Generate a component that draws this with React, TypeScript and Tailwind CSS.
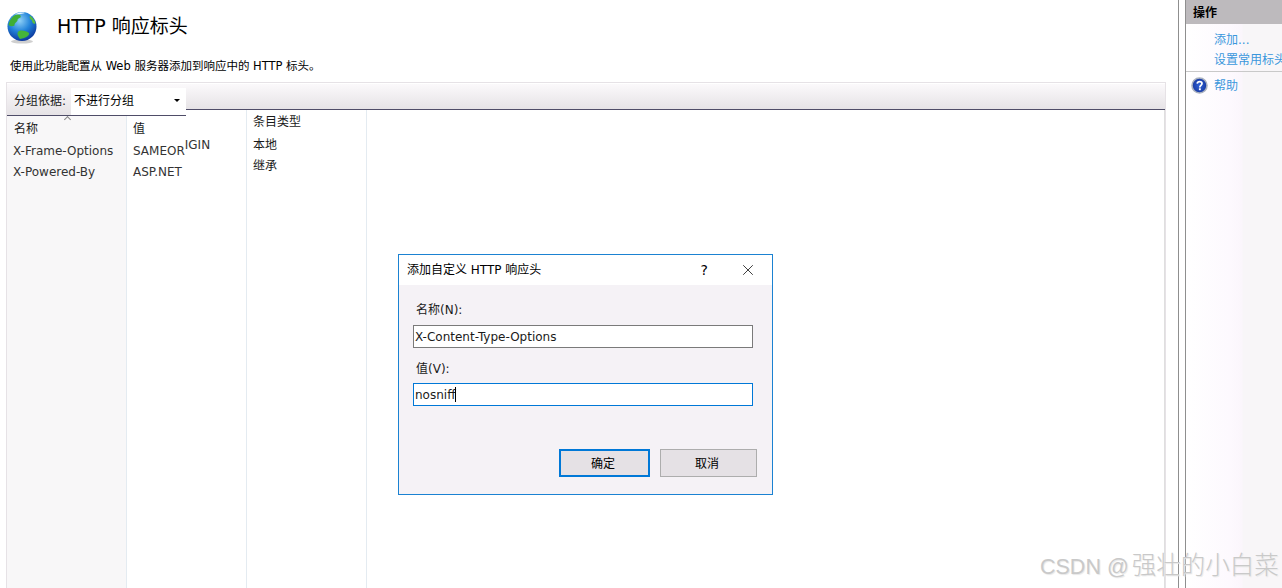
import { X } from "lucide-react";

const ui = "font-['DejaVu_Sans','Noto_Sans_CJK_SC',sans-serif]";

function Globe() {
  return (
    <svg width="32" height="34" viewBox="0 0 32 34">
      <defs>
        <radialGradient id="sea" cx="0.42" cy="0.3" r="0.75">
          <stop offset="0" stopColor="#8fd0f6" />
          <stop offset="0.5" stopColor="#2283da" />
          <stop offset="1" stopColor="#0a2f96" />
        </radialGradient>
      </defs>
      <ellipse cx="16" cy="31.5" rx="11" ry="2" fill="#cfcfcf" />
      <circle cx="16" cy="16.5" r="14.5" fill="url(#sea)" />
      <path d="M2.5 15c1-5 4-9 8-10.500 3-.5 5 .5 4 3-2 1-3 1-3 3-1 2-3 2-3 5-2 1-4 1-6-.5z" fill="#3fae35" />
      <path d="M14 29c-2-3-4-6-1-8 3-1 8 0 10 2 1 2-3 5-9 6z" fill="#45b53a" />
      <path d="M24 5.500c3 2 5 5 5.500 8-2 1-3.500-1-3.500-3-2-1-3-3-2-5z" fill="#58bd43" />
      <path d="M9 4.500c3-2 7-2.500 10-1.500-2 1-6 1-10 1.500z" fill="#e6f5ff" />
    </svg>
  );
}

function HelpIcon() {
  return (
    <svg width="17" height="17" viewBox="0 0 17 17">
      <defs>
        <radialGradient id="help" cx="0.5" cy="0.5" r="0.55">
          <stop offset="0" stopColor="#2f62d6" />
          <stop offset="0.8" stopColor="#1b3ea8" />
          <stop offset="1" stopColor="#16307f" />
        </radialGradient>
      </defs>
      <circle cx="8.500" cy="8.500" r="7.500" fill="url(#help)" stroke="#a9b1bf" strokeWidth="1.600" />
      <path d="M6.200 6.600c.2-1.400 1.200-2 2.400-2 1.400 0 2.400.8 2.400 2 0 1.800-2.200 1.800-2.200 3.800" fill="none" stroke="#fff" strokeWidth="1.700" />
      <rect x="7.900" y="11.300" width="1.900" height="1.900" fill="#fff" />
    </svg>
  );
}

export default function App() {
  return (
    <div className={`${ui} relative flex h-[588px] w-[1282px] overflow-hidden bg-white text-xs text-[#1a1a1a]`}>
      {/* main feature page */}
      <div className="flex w-[1166px] shrink-0 flex-col pl-[6px]">
        <div className="flex h-[54px] items-center">
          <Globe />
          <span className="ml-[19px] text-[19px] text-black">HTTP 响应标头</span>
        </div>
        <p className="pl-1 pt-[5px] text-[11.5px] leading-[14px] text-black">
          使用此功能配置从 Web 服务器添加到响应中的 HTTP 标头。
        </p>
        <div className="mt-[9px] flex min-h-0 flex-1 flex-col border-x border-t border-[#e6e2e6] pt-px">
          {/* toolbar strip, its group by part is drawn over it below */}
          <div className="h-[26px] shrink-0 border-b border-[#4f4d68] bg-[linear-gradient(#fbf9fb,#e6e3e6)]" />
          {/* grid columns */}
          <div className="flex min-h-0 flex-1">
            <div className="relative w-[120px] border-r border-[#e4ebf1] bg-[#f8f7f8] pl-[6px] pt-[11px]">
              <div className="h-[20px] pl-px">名称</div>
              <div className="mt-px h-[21px] leading-[18px] text-[#333]">X-Frame-Options</div>
              <div className="leading-[18px] text-[#333]">X-Powered-By</div>
            </div>
            <div className="w-[120px] border-r border-[#e4ebf1] pl-[6px] pt-[11px]">
              <div className="h-[20px]">值</div>
              <div className="relative mt-px h-[21px] leading-[18px] text-[#333]">
                SAMEOR<span className="relative -top-[6px]">IGIN</span>
              </div>
              <div className="leading-[18px] text-[#333]">ASP.NET</div>
            </div>
            <div className="w-[120px] border-r border-[#e4ebf1] pl-[6px] pt-[4px]">
              <div className="h-[21px]">条目类型</div>
              <div className="mt-px h-[21px] leading-[18px]">本地</div>
              <div className="leading-[18px]">继承</div>
            </div>
            <div className="flex-1 border-r border-[#dfdfdf]" />
          </div>
        </div>
      </div>

      {/* splitter */}
      <div className="ml-[12px] h-full w-[8px] shrink-0 border-x border-[#8f8f8f] bg-white" />

      {/* actions pane */}
      <div className="min-w-0 flex-1 overflow-hidden bg-[linear-gradient(90deg,#ffffff_0,#fdf9fe_44px,#fbf6fc_56px,#f8f6f8_57px)]">
        <div className="flex h-[24px] items-center bg-[#bdbabd] pl-[7px] pt-px font-bold text-black">操作</div>
        <div className="whitespace-nowrap pl-[28px] pt-[6px] leading-[20px] text-[#3a97dc]">
          <div>添加...</div>
          <div>设置常用标头...</div>
        </div>
        <div className="mt-[1px] border-t border-[#c9c9c9]" />
        <div className="flex items-center pl-[5px] pt-[5px] text-[#3a97dc]">
          <HelpIcon />
          <span className="ml-[6px]">帮助</span>
        </div>
      </div>

      {/* group by control hangs below the toolbar strip */}
      <div className="absolute left-[7px] top-[84px] flex h-[32px] w-[179px] items-end border-b border-[#4f4d68] bg-[linear-gradient(#fbf9fb,#e6e3e6)] text-black">
        <span className="h-[26px] w-[64px] shrink-0 pl-[7px] leading-[24px] text-[#1a1a1a]">分组依据:</span>
        <div className="flex h-[27px] flex-1 items-center justify-between bg-white pb-[2px] pl-[3px] pr-[6px]">
          <span>不进行分组</span>
          <div className="h-0 w-0 border-x-[3px] border-t-[3px] border-x-transparent border-t-black" />
        </div>
      </div>
      {/* sort caret */}
      <div className="absolute left-[65px] top-[117px] h-[5px] w-[5px] rotate-45 border-l border-t border-[#888]" />

      {/* dialog */}
      <div className="absolute left-[398px] top-[254px] flex h-[241px] w-[375px] flex-col border border-[#1b82d2] bg-[#f5f2f6]">
        <div className="flex h-[30px] shrink-0 items-center justify-between bg-white pl-[8px] pr-[15px] text-black">
          <span>添加自定义 HTTP 响应头</span>
          <div className="flex items-center gap-[31px]">
            <span className="text-[14px]">?</span>
            <X size={18} strokeWidth={1} />
          </div>
        </div>
        <div className="flex flex-1 flex-col px-[14px] pt-[17px]">
          <div className="pl-[3px] leading-[16px]">名称(N):</div>
          <div className="mt-[7px] flex h-[23px] w-[340px] items-center border border-[#7a7a7a] bg-white pl-px">
            X-Content-Type-Options
          </div>
          <div className="mt-[13px] pl-[3px] leading-[16px]">值(V):</div>
          <div className="mt-[6px] flex h-[23px] w-[340px] items-center border border-[#0078d7] bg-white pl-px">
            nosniff<span className="h-[15px] w-px bg-black" />
          </div>
          <div className="mt-[43px] flex justify-end gap-[10px] pr-px">
            <button className="h-[28px] w-[91px] border-2 border-[#0078d7] bg-[#e5e1e5] pr-[3px] pt-px text-black">确定</button>
            <button className="h-[28px] w-[97px] border border-[#adadad] bg-[#e5e1e5] pr-[3px] pt-px text-black">取消</button>
          </div>
        </div>
      </div>

      {/* watermark */}
      <div className="absolute left-[1040px] top-[551px] flex items-baseline whitespace-nowrap text-[21.5px] leading-[30px] text-[#c9c9c9] [text-shadow:1px_1px_1px_#e8e8e8] font-['Liberation_Sans','Noto_Sans_CJK_SC',sans-serif]">
        <span className="whitespace-pre">CSDN @</span>
        <span className="ml-[3px] text-[24.5px] font-light">强壮的小白菜</span>
      </div>
    </div>
  );
}
